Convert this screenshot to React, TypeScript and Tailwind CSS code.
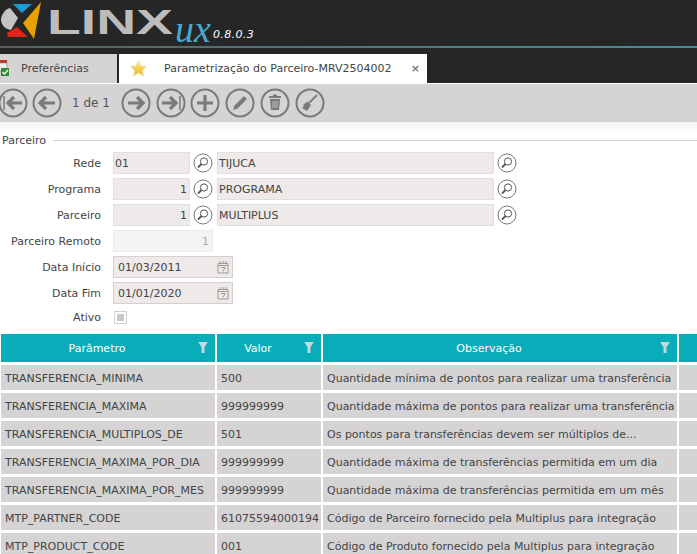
const font = { fontFamily: '"DejaVu Sans", sans-serif' };

const rows = [
  ['TRANSFERENCIA_MINIMA', '500', 'Quantidade mínima de pontos para realizar uma transferência'],
  ['TRANSFERENCIA_MAXIMA', '999999999', 'Quantidade máxima de pontos para realizar uma transferência'],
  ['TRANSFERENCIA_MULTIPLOS_DE', '501', 'Os pontos para transferências devem ser múltiplos de...'],
  ['TRANSFERENCIA_MAXIMA_POR_DIA', '999999999', 'Quantidade máxima de transferências permitida em um dia'],
  ['TRANSFERENCIA_MAXIMA_POR_MES', '999999999', 'Quantidade máxima de transferências permitida em um mês'],
  ['MTP_PARTNER_CODE', '61075594000194', 'Código de Parceiro fornecido pela Multiplus para integração'],
  ['MTP_PRODUCT_CODE', '001', 'Código de Produto fornecido pela Multiplus para integração'],
];

const Logo = () => (
  <div className="flex items-start h-full">
    <svg width="44" height="42" viewBox="0 0 44 42" className="shrink-0">
      <path d="M1 19 C2 13 6 9 10 8 L18 18 L11 30 C5 29 1 25 1 19Z" fill="#c4c4c4" />
      <path d="M13 4 L32 4 L22 13Z" fill="#1c9ad6" />
      <path d="M7 33 L17 27 L28 37 L8 37Z" fill="#e2231a" />
      <path d="M41 2 L34 39 L23 23Z" fill="#e89f00" />
    </svg>
    <span className="mt-[2px] ml-[3px] w-[128px] shrink-0 whitespace-nowrap text-[35px] leading-[40px] font-bold text-[#bcbcbc] font-['Liberation_Sans',sans-serif] scale-x-[1.58] origin-left">LINX</span>
    <span className="mt-[11px] text-[38px] leading-[36px] italic text-[#46a9d0] font-['Liberation_Serif',serif]">ux</span>
    <span className="mt-[28px] ml-[2px] text-[11px] leading-[14px] italic text-white tracking-[0.4px]">0.8.0.3</span>
  </div>
);

const NavIcon = ({ d, bars }: { d: string; bars?: string }) => (
  <svg width="30" height="30" viewBox="0 0 30 30" fill="none" stroke="#7a7a7a" className="shrink-0">
    <circle cx="15" cy="15" r="13.5" strokeWidth="2" />
    <path d={d} strokeWidth="3.2" />
    {bars && <path d={bars} strokeWidth="1.5" />}
  </svg>
);

const Search = () => (
  <svg width="20" height="20" viewBox="0 0 20 20" fill="none" className="shrink-0">
    <circle cx="10" cy="10" r="9" stroke="#555" strokeWidth="0.8" />
    <circle cx="11" cy="8.5" r="3.6" stroke="#555" strokeWidth="1" />
    <path d="M8.5 11 L5 14.5" stroke="#555" strokeWidth="1.8" />
  </svg>
);

const Calendar = () => (
  <svg width="12" height="14" viewBox="0 0 12 14" fill="none" stroke="#a09a92" className="shrink-0">
    <path d="M1 3.5 H11 V13 H1Z M1 5.5 H11 M3 1 V4 M6 1 V4 M9 1 V4" strokeWidth="1" />
    <path d="M4 7.5 H8 L6 11.5" strokeWidth="1" />
  </svg>
);

const Label = ({ children }: { children: string }) => (
  <span className="w-[101px] shrink-0 text-right text-[#444] mr-[12px]">{children}</span>
);

const Filter = () => (
  <svg width="10" height="11" viewBox="0 0 10 11" className="shrink-0">
    <path d="M0 0 H10 L6.5 5 V11 H3.5 V5Z" fill="#c9d6d8" />
  </svg>
);

const LookupRow = ({ label, code, name, right }: { label: string; code: string; name: string; right?: boolean }) => (
  <div className="flex items-center h-[22px]">
    <Label>{label}</Label>
    <div className={`w-[77px] h-[22px] bg-[#eeeae9] border border-[#e2dfde] flex items-center px-[1px] pr-[2px] text-[#444] ${right ? 'justify-end' : ''}`}>{code}</div>
    <div className="ml-[3px] mr-[4px]"><Search /></div>
    <div className="w-[277px] h-[22px] bg-[#eeeae9] border border-[#e2dfde] flex items-center px-[1px] text-[#444]">{name}</div>
    <div className="ml-[3px]"><Search /></div>
  </div>
);

const DateRow = ({ label, value }: { label: string; value: string }) => (
  <div className="flex items-center h-[22px]">
    <Label>{label}</Label>
    <div className="w-[120px] h-[22px] bg-[#eeeae9] border border-[#d3d0ce] flex items-center justify-between pl-[4px] pr-[3px] text-[#444]">
      {value}
      <Calendar />
    </div>
  </div>
);

export default function App() {
  return (
    <div className="w-[697px] h-[554px] overflow-hidden bg-white text-[11px] leading-none" style={font}>
      <div className="h-[83px] bg-[#262626] flex flex-col">
        <div className="h-[46px]"><Logo /></div>
        <div className="h-[2px] bg-gradient-to-r from-[#59605f] to-[#3f8f97]" />
        <div className="h-[6px]" />
        <div className="flex h-[29px] items-stretch">
          <div className="w-[117px] bg-[#d5d3d4] flex items-center">
            <svg width="10" height="17" viewBox="0 0 10 17" className="shrink-0">
              <rect x="-2" y="0" width="9" height="3" fill="#c0392b" />
              <rect x="-2" y="3" width="9" height="8" fill="#eee" stroke="#777" strokeWidth="0.5" />
              <rect x="1" y="8" width="8" height="8" fill="#2e8b2e" />
              <path d="M2.5 12 L4.5 14 L8 10" stroke="#fff" fill="none" strokeWidth="1.3" />
            </svg>
            <span className="ml-[11px] text-[#444]">Preferências</span>
          </div>
          <div className="w-[2px]" />
          <div className="w-[308px] bg-white flex items-center">
            <svg width="17" height="17" viewBox="0 0 24 24" className="ml-[11px] shrink-0">
              <defs>
                <linearGradient id="star" x1="0" y1="0" x2="0" y2="1">
                  <stop offset="0" stopColor="#fbe77a" />
                  <stop offset="1" stopColor="#f4b52c" />
                </linearGradient>
              </defs>
              <path d="M12 1.5 L15.4 8.3 L23 9.3 L17.5 14.6 L18.9 22.5 L12 18.5 L5.1 22.5 L6.5 14.6 L1 9.3 L8.6 8.3Z" fill="url(#star)" stroke="#f0dcae" strokeWidth="1.4" strokeLinejoin="round" />
            </svg>
            <span className="ml-[17px] text-[#444] whitespace-nowrap">Parametrização do Parceiro-MRV2504002</span>
            <span className="ml-auto mr-[7px] text-[#777] text-[11px] font-bold">×</span>
          </div>
        </div>
      </div>
      <div className="h-[38px] mt-[1px] bg-[#d5d3d4] flex items-center">
        <div className="flex items-center ml-[-2px]">
          <NavIcon d="M24 15 H10 M16 9 L10 15 L16 21" bars="M6 8 V22" />
          <div className="ml-[4px]"><NavIcon d="M23 15 H8 M14 9 L8 15 L14 21" /></div>
          <span className="ml-[10px] mr-[11px] w-[38px] text-center text-[12px] text-[#555] whitespace-nowrap">1 de 1</span>
          <NavIcon d="M7 15 H22 M16 9 L22 15 L16 21" />
          <div className="ml-[5px]"><NavIcon d="M6 15 H20 M14 9 L20 15 L14 21" bars="M24 8 V22" /></div>
          <div className="ml-[4px]"><NavIcon d="M15 7 V23 M7 15 H23" /></div>
          <div className="ml-[5px]">
            <svg width="30" height="30" viewBox="0 0 30 30" fill="none" stroke="#7a7a7a">
              <circle cx="15" cy="15" r="13.5" strokeWidth="2" />
              <path d="M8 22 L9.5 17.5 L19 8 L22 11 L12.5 20.5Z" fill="#7a7a7a" stroke="none" />
            </svg>
          </div>
          <div className="ml-[5px]">
            <svg width="30" height="30" viewBox="0 0 30 30" fill="none" stroke="#7a7a7a">
              <circle cx="15" cy="15" r="13.5" strokeWidth="2" />
              <path d="M9 9 H21 M13 7.5 H17" strokeWidth="1.8" />
              <path d="M10 11 H20 L19 22 H11Z" fill="#7a7a7a" stroke="none" />
              <path d="M13 13 V20 M15 13 V20 M17 13 V20" stroke="#d5d3d4" strokeWidth="0.8" />
            </svg>
          </div>
          <div className="ml-[5px]">
            <svg width="30" height="30" viewBox="0 0 30 30" fill="none" stroke="#7a7a7a">
              <circle cx="15" cy="15" r="13.5" strokeWidth="2" />
              <path d="M22 7 L14 15" strokeWidth="1.8" />
              <path d="M12.5 13.5 L16 17 L12 23 L7 20 L9 18 L8 17Z" fill="#7a7a7a" stroke="none" />
            </svg>
          </div>
        </div>
      </div>
      <div className="h-[12px] bg-gradient-to-b from-[#f4f4f4] to-white" />
      <div className="flex items-center h-[12px] pl-[2px] text-[#444]">
        Parceiro
        <div className="flex-1 h-px bg-[#d5d3d4] ml-[7px]" />
      </div>
      <div className="mt-[6px] flex flex-col gap-[4px]">
        <LookupRow label="Rede" code="01" name="TIJUCA" />
        <LookupRow label="Programa" code="1" name="PROGRAMA" right />
        <LookupRow label="Parceiro" code="1" name="MULTIPLUS" right />
        <div className="flex items-center h-[22px]">
          <Label>Parceiro Remoto</Label>
          <div className="w-[100px] h-[22px] bg-[#f5f4f4] border border-[#ebe9e9] flex items-center justify-end pr-[3px] text-[#aaa]">1</div>
        </div>
        <DateRow label="Data Início" value="01/03/2011" />
        <DateRow label="Data Fim" value="01/01/2020" />
        <div className="flex items-center h-[18px]">
          <Label>Ativo</Label>
          <div className="ml-[1px] w-[13px] h-[13px] border border-[#cfcfcf] flex items-center justify-center">
            <div className="w-[7px] h-[7px] bg-[#c8c8c8]" />
          </div>
        </div>
      </div>
      <div className="mt-[8px] grid grid-cols-[214px_104px_354px_19px] gap-x-[2px] gap-y-[3px] pl-[1px] text-[#444]">
        {['Parâmetro', 'Valor', 'Observação'].map((h) => (
          <div key={h} className="h-[28px] bg-[#09adb9] text-white flex items-center pr-[22px] relative">
            <span className="flex-1 text-center">{h}</span>
            <div className="absolute right-[7px] top-[8px]"><Filter /></div>
          </div>
        ))}
        <div className="h-[28px] bg-[#09adb9]" />
        {rows.map((r) =>
          [...r, ''].map((c, i) => (
            <div key={r[0] + i} className="h-[25px] bg-[#d5d3d4] flex items-center px-[4px] pt-[2px] whitespace-nowrap overflow-hidden">
              {c}
            </div>
          )),
        )}
      </div>
    </div>
  );
}
